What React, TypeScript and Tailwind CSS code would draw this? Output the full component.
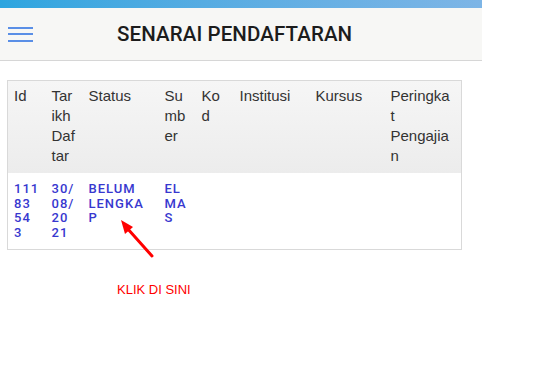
import React from "react";

const font = { fontFamily: '"Liberation Sans", Arial, sans-serif' };

// column cells, already split in the lines the narrow columns wrap to
const headers = [
  ["Id"],
  ["Tar", "ikh", "Daf", "tar"],
  ["Status"],
  ["Su", "mb", "er"],
  ["Ko", "d"],
  ["Institusi"],
  ["Kursus"],
  ["Peringka", "t", "Pengajia", "n"],
];
const row = [
  ["111", "83", "54", "3"],
  ["30/", "08/", "20", "21"],
  ["BELUM", "LENGKA", "P"],
  ["EL", "MA", "S"],
  [],
  [],
  [],
  [],
];

function Lines({ lines }: { lines: string[] }) {
  return (
    <>
      {lines.map((l, i) => (
        <span key={i} className="block whitespace-nowrap">
          {l}
        </span>
      ))}
    </>
  );
}

export default function App() {
  return (
    <div className="relative h-[376px] w-[552px] overflow-hidden bg-white" style={font}>
      <div className="w-[482px]">
        <div className="h-[8px] bg-gradient-to-r from-[#2ca5df] to-[#7db5e6]" />
        <div className="flex h-[53px] items-center border-b border-[#d6d6d6] bg-[#f7f7f5]">
          <div className="ml-[8px] flex w-[25px] flex-col gap-[4.5px]">
            <span className="block h-[2px] bg-[#5a8fe6]" />
            <span className="block h-[2px] bg-[#5a8fe6]" />
            <span className="block h-[2px] bg-[#5a8fe6]" />
          </div>
          <h1
            className="ml-[84px] text-[20.5px] font-medium tracking-[0.1px] text-[#1c1c1c]"
            style={{ fontFamily: 'Roboto, "Liberation Sans", sans-serif' }}
          >
            SENARAI PENDAFTARAN
          </h1>
        </div>

        <div className="px-[7px] pt-[19px]">
          <table className="w-[455px] table-fixed border-collapse border border-[#d9d9d9]">
            <colgroup>
              <col className="w-[38px]" />
              <col className="w-[37px]" />
              <col className="w-[76px]" />
              <col className="w-[37px]" />
              <col className="w-[38px]" />
              <col className="w-[76px]" />
              <col className="w-[75px]" />
              <col />
            </colgroup>
            <thead>
              <tr className="bg-gradient-to-b from-[#f6f6f6] to-[#ececec]">
                {headers.map((h, i) => (
                  <th key={i} className="pb-[7px] pl-[6px] pt-[5px] text-left align-top text-[15px] font-normal leading-[20px] text-[#333]">
                    <Lines lines={h} />
                  </th>
                ))}
              </tr>
            </thead>
            <tbody>
              <tr>
                {row.map((c, i) => (
                  <td
                    key={i}
                    className="pb-[9px] pl-[6px] pt-[9px] align-top text-[13px] font-medium leading-[14.5px] tracking-[1px] text-[#3838cf]"
                    style={{ fontFamily: 'Roboto, "Liberation Sans", sans-serif' }}
                  >
                    <Lines lines={c} />
                  </td>
                ))}
              </tr>
            </tbody>
          </table>
        </div>

        <p className="ml-[117px] mt-[30px] text-[13px] text-[#ff0000]">KLIK DI SINI</p>
      </div>

      <svg className="absolute left-0 top-0" width="552" height="376" viewBox="0 0 552 376">
        <line x1="152" y1="256" x2="127" y2="228" stroke="#ff0000" strokeWidth="3" strokeLinecap="round" />
        <polygon points="121,220 133,227 125,234" fill="#ff0000" />
      </svg>
    </div>
  );
}
